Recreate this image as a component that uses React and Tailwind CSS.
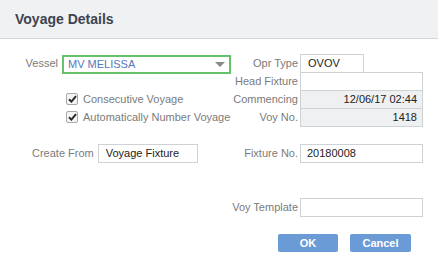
import React from "react";

const Label = ({ children, className = "" }) => (
  <span className={`text-[11px] text-[#7b7b7b] whitespace-nowrap ${className}`}>{children}</span>
);

const Field = ({ value = "", className = "", right = false, shaded = false }) => (
  <div
    className={`h-[19px] border border-[#cfd2d5] text-[11px] text-[#222] flex items-center leading-none whitespace-nowrap ${
      right ? "justify-end pr-[5px]" : "pl-[7px]"
    } ${shaded ? "bg-[#eef0f2]" : "bg-white"} ${className}`}
  >
    {value}
  </div>
);

const Check = ({ label }) => (
  <div className="flex items-center h-[18px] pl-[66px]">
    <div className="shrink-0 w-[12px] h-[12px] rounded-[2px] border border-[#a9a9a9] bg-[#f4f4f4] flex items-center justify-center">
      <svg width="9" height="8" viewBox="0 0 9 8">
        <path d="M1 4.2 L3.4 6.6 L8 1.2" stroke="#2a2a2a" strokeWidth="2" fill="none" />
      </svg>
    </div>
    <span className="ml-[5px] text-[11px] text-[#7b7b7b] whitespace-nowrap">{label}</span>
  </div>
);

const RightRow = ({ label, children }) => (
  <div className="flex items-center h-[18px]">
    <div className="w-[58px] flex justify-end">
      <Label>{label}</Label>
    </div>
    <div className="ml-[2px]">{children}</div>
  </div>
);

export default function App() {
  return (
    <div className="w-[438px] h-[267px] bg-white" style={{ fontFamily: '"Liberation Sans", Arial, sans-serif' }}>
      <div className="h-[39px] bg-[#eff1f3] border-b border-[#d3d6da] flex items-center pl-[15px]">
        <h1 className="text-[14px] font-bold text-[#3d4450]">Voyage Details</h1>
      </div>

      <div className="pt-[15px]">
        <div className="grid grid-cols-[240px_1fr]">
          <div className="flex flex-col">
            <div className="flex items-center h-[18px]">
              <div className="w-[58px] flex justify-end">
                <Label>Vessel</Label>
              </div>
              <div className="ml-[4px] mt-[2px] w-[169px] h-[19px] border-2 border-[#65c26a] flex items-center justify-between pl-[4px] pr-[4px]">
                <span className="text-[11px] text-[#5677bd]">MV MELISSA</span>
                <svg width="10" height="5" viewBox="0 0 10 5">
                  <path d="M0 0 H10 L5 5 Z" fill="#8a8a8a" />
                </svg>
              </div>
            </div>
            <div className="h-[18px]" />
            <Check label="Consecutive Voyage" />
            <Check label="Automatically Number Voyage" />
          </div>

          <div className="flex flex-col">
            <RightRow label="Opr Type">
              <Field value="OVOV" className="w-[64px]" />
            </RightRow>
            <RightRow label="Head Fixture">
              <Field className="w-[123px]" />
            </RightRow>
            <RightRow label="Commencing">
              <Field value="12/06/17 02:44" className="w-[123px]" right shaded />
            </RightRow>
            <RightRow label="Voy No.">
              <Field value="1418" className="w-[123px]" right shaded />
            </RightRow>
          </div>
        </div>

        <div className="grid grid-cols-[240px_1fr] mt-[18px]">
          <div className="flex items-center h-[18px] pl-[32px]">
            <Label>Create From</Label>
            <Field value="Voyage Fixture" className="ml-[4px] w-[100px]" />
          </div>
          <RightRow label="Fixture No.">
            <Field value="20180008" className="w-[123px] !pl-[6px]" />
          </RightRow>
        </div>

        <div className="grid grid-cols-[240px_1fr] mt-[36px]">
          <div />
          <RightRow label="Voy Template">
            <Field className="w-[123px]" />
          </RightRow>
        </div>

        <div className="flex justify-end gap-[12px] pr-[27px] mt-[18px]">
          <button className="w-[60px] h-[18px] rounded-[2px] bg-[#6a9bd6] text-white text-[11px] font-bold leading-none">
            OK
          </button>
          <button className="w-[61px] h-[18px] rounded-[2px] bg-[#6a9bd6] text-white text-[11px] font-bold leading-none">
            Cancel
          </button>
        </div>
      </div>
    </div>
  );
}
